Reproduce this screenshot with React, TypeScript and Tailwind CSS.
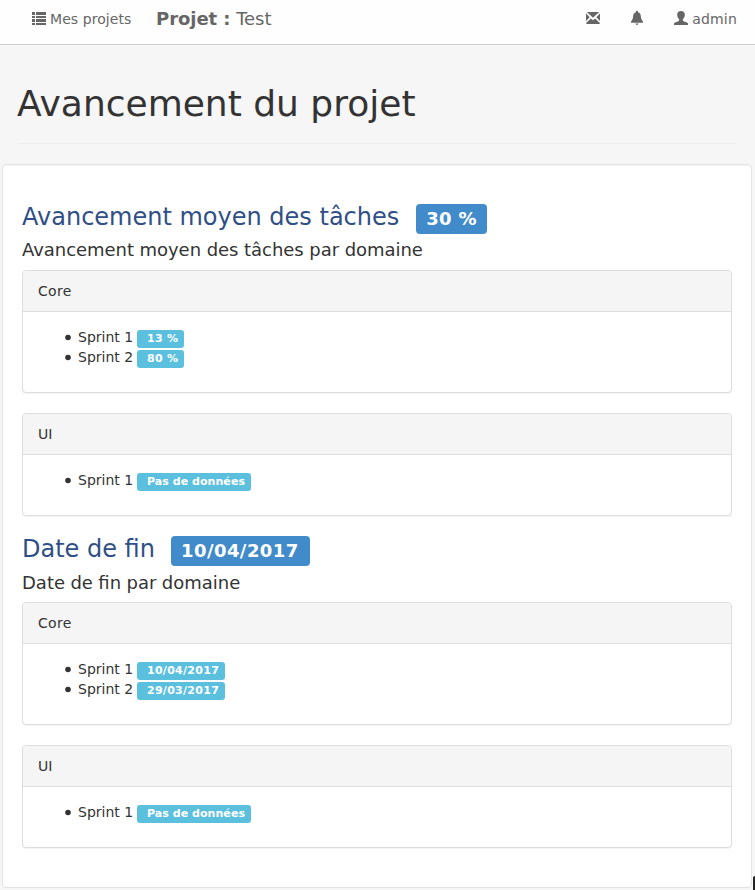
import React from "react";

function ListIcon() {
  return (
    <svg className="block h-3.5 w-3.5" viewBox="0 0 14 14" fill="currentColor" shapeRendering="crispEdges">
      <path d="M0 0h3v3H0zM4 0h10v3H4zM0 4h3v2H0zM4 4h10v2H4zM0 7h3v3H0zM4 7h10v3H4zM0 11h3v2H0zM4 11h10v2H4z" />
    </svg>
  );
}

function EnvelopeIcon() {
  return (
    <svg className="block h-3.5 w-3.5" viewBox="0 0 14 14" fill="currentColor">
      <path d="M.8 1h12.400L7 6.800zM0 2.300l3.700 4L0 10zM14 2.300l-3.700 4L14 10zM4.900 7.400 7 9.200l2.100-1.800 4.600 4.400V13H.3v-1.200z" />
    </svg>
  );
}

function BellIcon() {
  return (
    <svg className="block h-3.5 w-3.5" viewBox="0 0 14 14" fill="currentColor">
      <path d="M6 0h2v1.200c1.800.4 2.600 1.800 2.800 3.600.2 2.300.5 3.700 1.500 4.700.4.4.7.9.7 1.500v.7H1V11c0-.6.3-1.100.7-1.500 1-1 1.300-2.400 1.500-4.700C3.400 3 4.200 1.600 6 1.200zM5.500 12.600h3c-.1.800-.7 1.400-1.500 1.400s-1.400-.6-1.500-1.400z" />
    </svg>
  );
}

function UserIcon() {
  return (
    <svg className="block h-3.5 w-3.5" viewBox="0 0 14 14" fill="currentColor">
      <path d="M7 0C4.600 0 3.200 1.400 3.200 3.500c0 1.900.7 3.700 1.900 4.700v1.100c0 .4-.3.7-.7.9L1 11.600c-.7.3-1 .7-1 1.200V14h14v-1.200c0-.5-.3-.9-1-1.200l-3.400-1.400c-.4-.2-.7-.5-.7-.9V8.200c1.200-1 1.900-2.800 1.900-4.700C10.800 1.400 9.400 0 7 0z" />
    </svg>
  );
}

type Sprint = { name: string; value: string };

const isText = (value: string) => /^[A-Z]/.test(value);

function Domain({ name, sprints }: { name: string; sprints: Sprint[] }) {
  return (
    <div className="mb-5 rounded border border-[#ddd] bg-white shadow-[0_1px_1px_rgba(0,0,0,0.05)]">
      <div className="rounded-t-[3px] border-b border-[#ddd] bg-[#f5f5f5] px-[15px] py-2.5">
        <span className={name === "Core" ? "tracking-[0.3px]" : ""}>{name}</span>
      </div>
      <div className="p-[15px]">
        <ul className="mb-2.5 pl-[27px]">
          {sprints.map((s) => (
            <li key={s.name} className="flex h-5 items-start">
              <svg className="mt-[7px] mr-[7px] h-[7px] w-1.5" viewBox="0 0 6 7" fill="#333">
                <circle cx="3" cy="3.500" r="2.800" />
              </svg>
              <span className="w-[59px] whitespace-nowrap">{s.name}</span>
              <span
                className={`mt-[3px] h-[18px] whitespace-nowrap rounded-[3px] bg-[#5bc0de] pr-1.5 pl-2.5 text-[11px] leading-[17px] font-bold text-white ${
                  isText(s.value) ? "tracking-[0.05px]" : "tracking-[0.28px]"
                }`}
              >
                {s.value}
              </span>
            </li>
          ))}
        </ul>
      </div>
    </div>
  );
}

function Heading({ title, value, sub, low }: { title: string; value: string; sub: string; low?: boolean }) {
  return (
    <div className="h-[86px] pt-5">
      <h3 className={`flex items-start text-[24px] leading-[26px] text-[#2f4f86] ${low ? "h-9" : "h-[35px]"}`}>
        <span>{title}</span>
        <span
          className={`h-[30px] rounded bg-[#428bca] px-2.5 text-[18px] leading-[30px] font-bold text-white ${
            low ? "ml-4 w-[139px] tracking-[0.45px]" : "ml-[17px] tracking-[0.3px]"
          }`}
        >
          {value}
        </span>
      </h3>
      <h4 className={`text-[18px] leading-[22px] ${low ? "[word-spacing:-0.3px]" : "tracking-[-0.05px]"}`}>{sub}</h4>
    </div>
  );
}

export default function App() {
  return (
    <div className="relative h-[890px] w-[755px] overflow-hidden bg-[#f6f6f6] font-['DejaVu_Sans',sans-serif] text-[14px] leading-5 text-[#333]">
      <nav className="flex h-[45px] items-start border-b border-[#ccc] bg-[#fefefe] pt-[9px] pl-8 text-[#666]">
        <a className="flex w-[99px] tracking-[0.07px]">
          <span className="mt-[3px] mr-1">
            <ListIcon />
          </span>
          <span className="whitespace-nowrap">Mes projets</span>
        </a>
        <span className="ml-[25px] text-[18px] tracking-[-0.05px]">
          <b>Projet :</b> Test
        </span>
        <div className="mr-[18px] ml-auto flex">
          <span className="mt-[2px] mr-[30px]">
            <EnvelopeIcon />
          </span>
          <span className="mt-[2px] mr-[30px]">
            <BellIcon />
          </span>
          <a className="flex">
            <span className="mt-[2px] mr-1">
              <UserIcon />
            </span>
            <span className="tracking-[0.2px]">admin</span>
          </a>
        </div>
      </nav>
      <header className="mr-[18px] ml-[17px] h-[99px] border-b border-[#eee] pt-[39px]">
        <h1 className="text-[36px] leading-10">Avancement du projet</h1>
      </header>
      <main className="mt-5 ml-[2px] h-[724px] w-[750px] rounded border border-[#e3e3e3] bg-white p-[19px] shadow-[inset_0_1px_1px_rgba(0,0,0,0.05)]">
        <Heading title="Avancement moyen des tâches" value="30 %" sub="Avancement moyen des tâches par domaine" />
        <Domain
          name="Core"
          sprints={[
            { name: "Sprint 1", value: "13 %" },
            { name: "Sprint 2", value: "80 %" },
          ]}
        />
        <Domain name="UI" sprints={[{ name: "Sprint 1", value: "Pas de données" }]} />
        <div className="-mt-5">
          <Heading low title="Date de fin" value="10/04/2017" sub="Date de fin par domaine" />
        </div>
        <Domain
          name="Core"
          sprints={[
            { name: "Sprint 1", value: "10/04/2017" },
            { name: "Sprint 2", value: "29/03/2017" },
          ]}
        />
        <Domain name="UI" sprints={[{ name: "Sprint 1", value: "Pas de données" }]} />
      </main>
      <div className="absolute right-0 bottom-0 h-[14px] w-[2px] rounded-tl-[2px] bg-[#222]" />
    </div>
  );
}
